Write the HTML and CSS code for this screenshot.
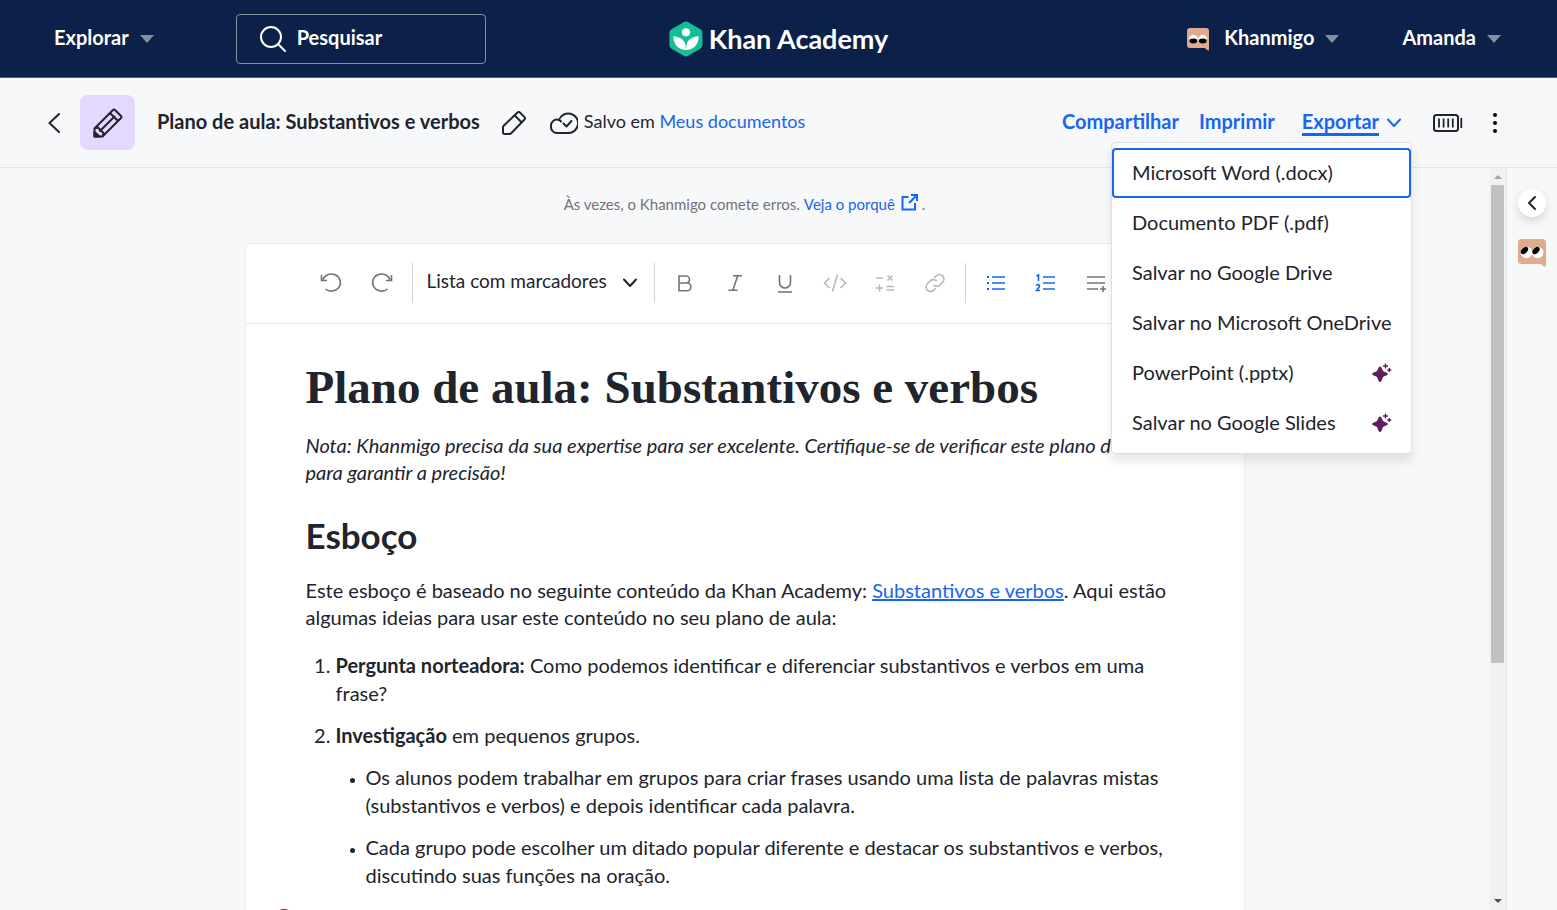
FILE: index.html
```html
<!DOCTYPE html>
<html lang="pt-BR">
<head>
<meta charset="UTF-8" />
<meta name="viewport" content="width=device-width, initial-scale=1" />
<title>Plano de aula: Substantivos e verbos | Khan Academy</title>
<link rel="stylesheet" href="styles.css">
</head>
<body>
  <nav class="topnav">
    <div class="nav-left">
      <button class="nav-btn" type="button">Explorar
        <svg class="caret" width="14" height="8" viewBox="0 0 14 8"><path d="M0 0h14L7 8z"/></svg>
      </button>
      <label class="search">
        <svg width="26" height="26" viewBox="0 0 26 26" fill="none" stroke="#fff" stroke-width="2" stroke-linecap="round"><circle cx="11" cy="11" r="10"/><path d="M18 18l7 7"/></svg>
        <input type="text" placeholder="Pesquisar" aria-label="Pesquisar" />
      </label>
    </div>

    <a class="brand" href="#">
      <svg width="34" height="36" viewBox="0 0 34 36">
        <path fill="#14bf96" d="M14.6 1.2a4.4 4.4 0 0 1 4.6 0l12.1 7a4.4 4.4 0 0 1 2.1 3.8v12a4.4 4.4 0 0 1-2.1 3.8l-12.1 7a4.4 4.4 0 0 1-4.6 0l-12.1-7A4.4 4.4 0 0 1 .4 24V12a4.4 4.4 0 0 1 2.1-3.8z"/>
        <circle cx="17" cy="11.3" r="4.1" fill="#fff"/>
        <path fill="#fff" d="M4.3 15.200c7.400 0 12.700 5 12.700 11.200 0-6.200 5.300-11.200 12.700-11.200 0 8-5.200 13.800-12.700 13.800S4.300 23.200 4.300 15.200z"/>
        <path fill="none" stroke="#14bf96" stroke-width=".6" d="M17 20.500v7"/>
      </svg>
      <span>Khan Academy</span>
    </a>

    <div class="nav-right">
      <button class="nav-btn" type="button">
        <svg class="face" width="24" height="24" viewBox="0 0 24 24">
          <path fill="#deab8e" d="M4 1h16a3 3 0 0 1 3 3v19.500c-1.500 0-3-1-4-2.500H4a3 3 0 0 1-3-3V4a3 3 0 0 1 3-3z"/>
          <ellipse cx="7.500" cy="12" rx="4.300" ry="4.300" fill="#fff"/><ellipse cx="16.800" cy="12" rx="4.300" ry="4.300" fill="#fff"/>
          <ellipse cx="7.300" cy="14" rx="3.900" ry="2.400"/><ellipse cx="16.800" cy="14" rx="3.900" ry="2.400"/>
        </svg>
        Khanmigo
        <svg class="caret" width="14" height="8" viewBox="0 0 14 8"><path d="M0 0h14L7 8z"/></svg>
      </button>
      <button class="nav-btn" type="button">Amanda
        <svg class="caret" width="14" height="8" viewBox="0 0 14 8"><path d="M0 0h14L7 8z"/></svg>
      </button>
    </div>
  </nav>

  <header class="docbar">
    <button class="icon-btn" type="button" aria-label="Voltar">
      <svg width="12" height="20" viewBox="0 0 12 20" class="line"><path d="M11 1L1.500 10 11 19"/></svg>
    </button>
    <span class="doc-badge">
      <svg width="30" height="30" viewBox="0 0 30 30" class="line"><path d="M1.500 28.500v-8L20 2q1-1 2 0l6 6q1 1 0 2L9.500 28.500zM17 5l8 8M7 23L21.500 8.500M1.500 20.500l3.500-1 5.500 5.500-1 3.500" stroke-width="2"/><path d="M1.500 24l5 4.500h-5z" fill="#21242c"/></svg>
    </span>
    <strong class="doc-title">Plano de aula: Substantivos e verbos</strong>
    <button class="icon-btn" type="button" aria-label="Renomear">
      <svg width="24" height="24" viewBox="0 0 24 24" class="line"><path d="M1 21.500V16.500q0-1 .7-1.700L15.500 1.500q1.200-1 2.400 0l4.600 4.600q1 1.200 0 2.400L9.200 22.300q-.7.700-1.700.7H2.500Q1 23 1 21.500zM12.800 4.500l6.700 6.700" stroke-width="2"/></svg>
    </button>
    <p class="saved">
      <svg width="28" height="22" viewBox="0 0 28 22" class="line"><path d="M7 21a6 6 0 0 1-6-6.500 6 6 0 0 1 8-6.500A9.800 9.800 0 1 1 18 21zM9 8q1.500.5 2 1.500M13.500 11.500l3 3L21.500 9" stroke-width="2"/></svg>
      <span>Salvo em <a href="#">Meus documentos</a></span>
    </p>

    <div class="actions">
      <button class="action" type="button">Compartilhar</button>
      <button class="action" type="button">Imprimir</button>
      <div class="export">
        <button class="action action-open" type="button" aria-expanded="true"><span>Exportar</span>
          <svg width="16" height="10" viewBox="0 0 16 10" fill="none" stroke="#1865f2" stroke-width="2" stroke-linecap="round" stroke-linejoin="round"><path d="M2 1.500l6 6.500 6-6.500"/></svg>
        </button>
        <div class="menu">
          <button class="menu-item focused" type="button">Microsoft Word (.docx)</button>
          <button class="menu-item" type="button">Documento PDF (.pdf)</button>
          <button class="menu-item" type="button">Salvar no Google Drive</button>
          <button class="menu-item" type="button">Salvar no Microsoft OneDrive</button>
          <button class="menu-item" type="button">PowerPoint (.pptx)
            <svg width="20" height="20" viewBox="0 0 20 20"><path fill="#5f1e5c" d="M8 3.500q1 0 1.400 1l1.400 3q.3.600 1 .9l3 1.400q1 .5 1 1.200t-1 1.200l-3 1.400q-.7.300-1 .9L9.400 18q-.4 1-1.400 1t-1.400-1l-1.400-3.500q-.3-.6-1-.9l-3-1.400q-1-.5-1-1.200t1-1.200l3-1.400q.7-.3 1-.9l1.400-3q.4-1 1.400-1z"/><path stroke="#5f1e5c" stroke-width="1.400" d="M13.500.5v5M11 3h5M17.300 5v4M15.300 7h4"/></svg>
          </button>
          <button class="menu-item" type="button">Salvar no Google Slides
            <svg width="20" height="20" viewBox="0 0 20 20"><path fill="#5f1e5c" d="M8 3.500q1 0 1.400 1l1.400 3q.3.600 1 .9l3 1.400q1 .5 1 1.200t-1 1.200l-3 1.400q-.7.300-1 .9L9.400 18q-.4 1-1.400 1t-1.400-1l-1.400-3.500q-.3-.6-1-.9l-3-1.400q-1-.5-1-1.200t1-1.200l3-1.400q.7-.3 1-.9l1.400-3q.4-1 1.400-1z"/><path stroke="#5f1e5c" stroke-width="1.400" d="M13.500.5v5M11 3h5M17.300 5v4M15.300 7h4"/></svg>
          </button>
        </div>
      </div>
      <svg class="battery" width="30" height="18" viewBox="0 0 30 18" fill="none" stroke="#21242c"><rect x="1" y="1" width="24" height="16" rx="2.500" stroke-width="2"/><path d="M6 4.500v9M10.600 4.500v9M15.200 4.500v9M19.800 4.500v9M28.300 4v10" stroke-width="1.800"/></svg>
      <button class="icon-btn" type="button" aria-label="Mais opções">
        <svg width="4" height="20" viewBox="0 0 4 20"><circle cx="2" cy="2" r="2"/><circle cx="2" cy="10" r="2"/><circle cx="2" cy="18" r="2"/></svg>
      </button>
    </div>
  </header>

  <div class="workspace">
    <main class="page">
      <p class="notice">Às vezes, o Khanmigo comete erros. <a href="#">Veja o porquê
        <svg width="17" height="17" viewBox="0 0 17 17" fill="none" stroke="#1865f2" stroke-width="2"><path d="M7.500 3H1.500v12.500H14V9M10 1h6v6M16 1L8 9"/></svg></a> .</p>

      <article class="sheet">
        <div class="toolbar">
          <div class="history">
            <button class="tool" type="button" aria-label="Desfazer"><svg width="22" height="22" viewBox="0 0 22 22"><path d="M3 7.500A9 8.500 0 1 1 5.500 17M1.500 3v5.500H7"/></svg></button>
            <button class="tool" type="button" aria-label="Refazer"><svg width="22" height="22" viewBox="0 0 22 22"><path d="M19 7.500A9 8.500 0 1 0 16.500 17M20.500 3v5.500H15"/></svg></button>
          </div>
          <span class="sep"></span>
          <div class="style-picker">
            <select aria-label="Estilo do texto"><option>Lista com marcadores</option></select>
            <svg width="16" height="10" viewBox="0 0 16 10" class="line"><path d="M2 1.500L8 8l6-6.500"/></svg>
          </div>
          <span class="sep"></span>
          <button class="tool" type="button" aria-label="Negrito"><svg width="22" height="22" viewBox="0 0 22 22"><path d="M5 4h7a3.500 3.500 0 0 1 0 7H5zM5 11h8a3.900 3.900 0 0 1 0 7.800H5z"/></svg></button>
          <button class="tool" type="button" aria-label="Itálico"><svg width="22" height="22" viewBox="0 0 22 22"><path d="M9 3.800h9M4.500 18.300h9M13.800 3.800L8.800 18.300"/></svg></button>
          <button class="tool" type="button" aria-label="Sublinhado"><svg width="22" height="22" viewBox="0 0 22 22"><path d="M5.500 3v7.500a5.500 5.500 0 0 0 11 0V3M4 20h14"/></svg></button>
          <button class="tool off" type="button" aria-label="Código" disabled><svg width="24" height="22" viewBox="0 0 24 22"><path d="M6.500 6L1.500 11l5 5M17.500 6l5 5-5 5M14.500 2.500l-5 17"/></svg></button>
          <button class="tool off" type="button" aria-label="Equação" disabled><svg width="22" height="22" viewBox="0 0 22 22"><path d="M2 6h7M13.500 3.500l5 5M18.500 3.500l-5 5M2 16h7M5.500 12.500v7M12.500 14.500H20M12.500 18H20"/></svg></button>
          <button class="tool off" type="button" aria-label="Link" disabled><svg width="22" height="22" viewBox="0 0 22 22"><path d="M9.300 12.800a4.500 4.500 0 0 0 6.500.3l2.800-2.800a4.500 4.500 0 0 0-6.400-6.400l-2 2M12.700 9.200a4.500 4.500 0 0 0-6.500-.3l-2.800 2.800a4.500 4.500 0 0 0 6.400 6.400l2-2"/></svg></button>
          <span class="sep"></span>
          <button class="tool on" type="button" aria-label="Lista com marcadores"><svg width="22" height="22" viewBox="0 0 22 22"><path d="M2 5h2M2 11h2M2 17h2" stroke-width="2"/><path d="M7 5h13M7 11h13M7 17h13"/></svg></button>
          <button class="tool on" type="button" aria-label="Lista numerada"><svg width="22" height="22" viewBox="0 0 22 22"><path d="M1.500 4l2-1.200V9M1.300 13.800q.3-1.300 1.700-1.300 1.500 0 1.500 1.500 0 1-3 4.500h3.500M8 5h12M8 11h12M8 17h12"/></svg></button>
          <button class="tool" type="button" aria-label="Inserir"><svg width="22" height="22" viewBox="0 0 22 22"><path d="M2 5h18M2 11h18M2 17h11M18 14v6M15 17h6"/></svg></button>
        </div>

        <div class="content">
          <h1>Plano de aula: Substantivos e verbos</h1>
          <p><em>Nota: Khanmigo precisa da sua expertise para ser excelente. Certifique-se de verificar este plano de aula para garantir a precisão!</em></p>
          <h2>Esboço</h2>
          <p>Este esboço é baseado no seguinte conteúdo da Khan Academy: <a href="#">Substantivos e verbos</a>. Aqui estão algumas ideias para usar este conteúdo no seu plano de aula:</p>
          <ol>
            <li><strong>Pergunta norteadora:</strong> Como podemos identificar e diferenciar substantivos e verbos em uma frase?</li>
            <li><strong>Investigação</strong> em pequenos grupos.
              <ul>
                <li>Os alunos podem trabalhar em grupos para criar frases usando uma lista de palavras mistas (substantivos e verbos) e depois identificar cada palavra.</li>
                <li>Cada grupo pode escolher um ditado popular diferente e destacar os substantivos e verbos, discutindo suas funções na oração.</li>
              </ul>
            </li>
          </ol>
          <svg class="gutter-mark" width="20" height="20" viewBox="0 0 20 20"><circle cx="10" cy="10" r="9" fill="none" stroke="#5f1e5c" stroke-width="2"/></svg>
        </div>
      </article>
    </main>

    <div class="scrollbar">
      <svg width="8" height="4" viewBox="0 0 8 4"><path fill="#a3a3a3" d="M0 4h8L4 0z"/></svg>
      <span class="thumb"></span>
      <svg width="8" height="4" viewBox="0 0 8 4"><path fill="#505050" d="M0 0h8L4 4z"/></svg>
    </div>

    <aside class="rail">
      <button class="round" type="button" aria-label="Abrir painel">
        <svg width="10" height="16" viewBox="0 0 10 16" class="line"><path d="M8 2L2 8l6 6"/></svg>
      </button>
      <svg width="28" height="28" viewBox="0 0 28 28">
        <path fill="#deab8e" d="M3.500 0h21A3.500 3.500 0 0 1 28 3.500v24c-2 .3-4-.8-5-2.500H3.500A3.500 3.500 0 0 1 0 21.500v-18A3.500 3.500 0 0 1 3.500 0z"/>
        <circle cx="8.500" cy="13.500" r="5.800" fill="#fff"/><circle cx="19.700" cy="13.500" r="5.800" fill="#fff"/>
        <ellipse cx="6.500" cy="11.500" rx="4.400" ry="2.700" transform="rotate(-45 6.500 11.500)"/><ellipse cx="18" cy="11.500" rx="4.400" ry="2.700" transform="rotate(-45 18 11.500)"/>
      </svg>
    </aside>
  </div>
</body>
</html>
```
FILE: styles.css
```css
* { box-sizing: border-box; }
body { margin: 0; height: 100vh; display: flex; flex-direction: column; overflow: hidden; font-family: Lato, "Liberation Sans", sans-serif; font-size: 20px; color: #21242c; background: #f7f8fa; }
button, input, select { font: inherit; color: inherit; background: none; border: 0; padding: 0; margin: 0; }
button { cursor: pointer; }
a { color: #1865f2; text-decoration: none; }
svg { display: block; flex: none; }
.line { fill: none; stroke: #21242c; stroke-width: 2; stroke-linecap: round; stroke-linejoin: round; }

/* barra superior */
.topnav { display: grid; grid-template-columns: 1fr auto 1fr; align-items: center; height: 78px; flex: none; background: #0b2149; border-bottom: 1px solid #545f7d; color: #fff; }
.nav-left, .nav-right { display: flex; align-items: center; }
.nav-left { gap: 82px; padding-left: 54px; }
.nav-right { justify-content: flex-end; gap: 63px; padding-right: 56px; }
.nav-btn { display: flex; align-items: center; gap: 10px; font-weight: bold; padding-bottom: 4px; }
.caret { fill: #858fa4; margin: 5px 0 0 1px; }
.face { margin: 4px 4px 0 0; }
.search { display: flex; align-items: center; gap: 11px; width: 250px; height: 50px; padding: 0 23px; border: 1px solid #858fa4; border-radius: 4px; }
.search input { width: 100%; min-width: 0; font-weight: bold; padding-bottom: 3px; outline: none; }
.search input::placeholder { color: #fff; opacity: 1; }
.brand { display: flex; align-items: center; gap: 6px; color: #fff; font-size: 27px; font-weight: bold; }

/* cabeçalho do documento */
.docbar { display: flex; align-items: center; flex: none; height: 90px; padding: 0 60px 0 48px; border-bottom: 1px solid #e4e6ea; }
.doc-badge { display: grid; place-items: center; width: 55px; height: 55px; margin: 0 22px 0 20px; border-radius: 8px; background: #e5d8ff; }
.doc-title, .saved span, .action { line-height: 24px; padding-bottom: 4px; }
.doc-title { margin-right: 22px; }
.saved { display: flex; align-items: center; gap: 6px; margin: 0 0 0 24px; font-size: 18px; }
.actions { display: flex; align-items: center; margin-left: auto; }
.action { color: #1865f2; font-weight: bold; margin-right: 20px; }
.export { position: relative; margin: 0 31px 0 7px; }
.action-open { display: flex; align-items: center; gap: 7px; margin: 0; padding: 0; }
.action-open span { padding: 0; border-bottom: 3px solid #1865f2; }
.battery { margin-right: 30px; }
.menu { position: absolute; top: 33px; right: -10px; z-index: 2; width: 301px; padding: 5px 0; background: #fff; border: 1px solid #dfe0e3; border-radius: 4px; box-shadow: 0 8px 8px rgba(33, 36, 44, .1); }
.menu-item { display: flex; align-items: center; justify-content: space-between; width: 100%; height: 50px; padding: 0 19px 3px 20px; text-align: left; white-space: nowrap; }
.menu-item svg { margin-top: 3px; }
.menu-item.focused { border-radius: 4px; box-shadow: inset 0 0 0 2px #1865f2; }

/* área de trabalho */
.workspace { display: flex; flex: 1; min-height: 0; }
.page { flex: 1; min-width: 0; overflow: hidden; }
.notice { display: flex; justify-content: center; gap: 4px; margin: 0; padding: 26px 0 29px; font-size: 15px; line-height: 20px; color: #717379; }
.notice a { display: flex; gap: 6px; }
.sheet { max-width: 1000px; margin: 0 auto; background: #fff; border: 1px solid #ebecee; border-radius: 4px; }
.toolbar { display: flex; align-items: center; height: 80px; padding: 0 0 2px 60px; border-bottom: 1px solid #e8e9eb; }
.history { display: flex; gap: 1px; }
.sep { flex: none; width: 1px; height: 40px; margin: 0 5px; background: #d3d4d7; }
.tool { display: grid; place-items: center; flex: none; width: 50px; height: 40px; }
.tool svg { fill: none; stroke: #717379; stroke-width: 1.6; }
.off svg { stroke: #b8b9bb; }
.on svg { stroke: #1865f2; }
.style-picker { display: flex; align-items: center; flex: none; width: 231px; padding-left: 9px; font-size: 19px; }
.style-picker select { flex: 1; height: 30px; appearance: none; padding-bottom: 4px; outline: none; }
.style-picker svg { margin: 0 11px 0 0; }

.content { position: relative; padding: 35px 60px; line-height: 28px; }
.content h1 { margin: 0 0 17px; font-family: "Liberation Serif", serif; font-size: 47px; line-height: 56px; }
.content h2 { margin: 0 0 20px; font-size: 35px; line-height: 44px; }
.content p { margin: 0 0 27px; line-height: 27px; }
.content p a { text-decoration: underline; }
.content ol { margin: -7px 0 0; padding-left: 30px; }
.content ul { margin: 14px 0 0; padding-left: 30px; list-style: disc; }
.content li { margin-bottom: 14px; }
.content ul li::marker { font-size: 14px; }
.gutter-mark { position: absolute; left: 28px; bottom: 9px; }

.scrollbar { display: flex; flex-direction: column; align-items: center; width: 17px; padding: 7px 0; background: #f1f1f1; }
.thumb { width: 13px; height: 478px; margin: 6px 0 auto; background: #c1c1c1; }
.rail { display: flex; flex-direction: column; align-items: center; gap: 22px; width: 51px; padding-top: 21px; border-left: 1px solid #e4e6ea; }
.round { display: grid; place-items: center; width: 28px; height: 28px; border-radius: 50%; background: #fff; box-shadow: 0 4px 8px rgba(33, 36, 44, .16); }
```
